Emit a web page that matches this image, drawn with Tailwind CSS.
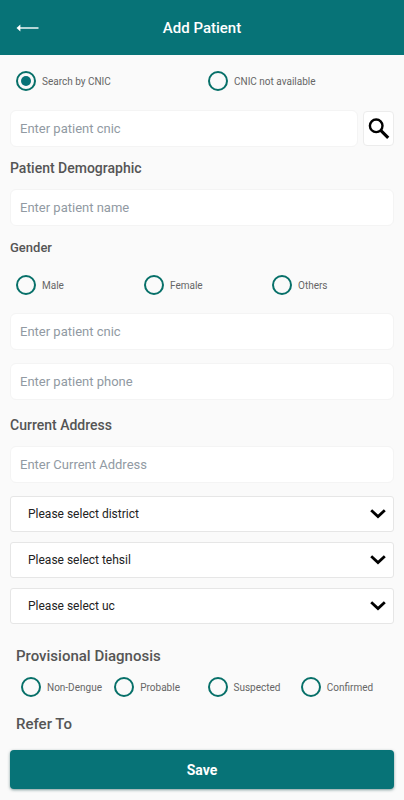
<!DOCTYPE html>
<html lang="en">
<head>
<meta charset="utf-8">
<meta name="viewport" content="width=device-width, initial-scale=1">
<title>Add Patient</title>
<script src="https://cdn.jsdelivr.net/npm/@tailwindcss/browser@4"></script>
</head>
<body class="min-h-screen bg-[#fafafa] font-[Roboto,sans-serif] text-[#555555]">
<header class="grid h-[55px] grid-cols-[1fr_auto_1fr] items-center bg-[#077377] px-4 text-white">
  <button type="button" aria-label="Back" class="justify-self-start">
    <svg class="block h-3 w-6" viewBox="0 0 24 12" fill="none" stroke="currentColor"><path d="M3 6H22.5" stroke-width="1.4"/><path d="M.5 6L4.4 2.6V9.4Z" fill="currentColor" stroke="none"/></svg>
  </button>
  <h1 class="text-[15px] leading-5 font-medium">Add Patient</h1>
</header>
<main>
<form class="px-[10px] pb-[11px]">
  <div role="radiogroup" aria-label="Search mode" class="-mr-[6px] grid h-[52px] grid-cols-2 items-center pl-[6px] text-[10px] text-[#666666]">
    <label class="flex items-center gap-[6px]"><input type="radio" name="mode" checked class="size-5 appearance-none rounded-full border-2 border-[#077069] checked:bg-[#077377] checked:bg-clip-content checked:p-[3px]">Search by CNIC</label>
    <label class="flex items-center gap-[6px]"><input type="radio" name="mode" class="size-5 appearance-none rounded-full border-2 border-[#077069] checked:bg-[#077377] checked:bg-clip-content checked:p-[3px]">CNIC not available</label>
  </div>
  <div class="mt-[3px] flex items-center gap-[5px]">
    <input type="text" aria-label="Search patient cnic" placeholder="Enter patient cnic" class="h-[37px] min-w-0 flex-1 rounded-md border border-[#f4f4f4] bg-white px-[9px] text-[13px] placeholder:text-[#919aa3]">
    <button type="button" aria-label="Search" class="flex h-[35px] w-[31px] items-center justify-center rounded-sm border border-[#ececec] bg-white text-black">
      <svg class="size-6 shrink-0" viewBox="0 0 24 24" fill="none" stroke="currentColor"><circle cx="9.2" cy="8.8" r="6.3" stroke-width="2.4"/><path d="M13.7 13.3L21.2 20.8" stroke-width="3.1"/></svg>
    </button>
  </div>
  <h2 class="flex h-[42px] items-center text-sm font-medium">Patient Demographic</h2>
  <input type="text" aria-label="Patient name" placeholder="Enter patient name" class="block h-[37px] w-full rounded-md border border-[#f4f4f4] bg-white px-[9px] text-[13px] placeholder:text-[#919aa3]">
  <h3 id="gender" class="flex h-11 items-center text-[13px] font-medium">Gender</h3>
  <div role="radiogroup" aria-labelledby="gender" class="-mr-[6px] grid h-[30px] grid-cols-3 items-center pl-[6px] text-[10px] text-[#666666]">
    <label class="flex items-center gap-[6px]"><input type="radio" name="gender" class="size-5 appearance-none rounded-full border-2 border-[#077069] checked:bg-[#077377] checked:bg-clip-content checked:p-[3px]">Male</label>
    <label class="flex items-center gap-[6px]"><input type="radio" name="gender" class="size-5 appearance-none rounded-full border-2 border-[#077069] checked:bg-[#077377] checked:bg-clip-content checked:p-[3px]">Female</label>
    <label class="flex items-center gap-[6px]"><input type="radio" name="gender" class="size-5 appearance-none rounded-full border-2 border-[#077069] checked:bg-[#077377] checked:bg-clip-content checked:p-[3px]">Others</label>
  </div>
  <div class="mt-[13px] flex flex-col gap-[13px]">
    <input type="text" aria-label="Patient cnic" placeholder="Enter patient cnic" class="h-[37px] w-full rounded-md border border-[#f4f4f4] bg-white px-[9px] text-[13px] placeholder:text-[#919aa3]">
    <input type="tel" aria-label="Patient phone" placeholder="Enter patient phone" class="h-[37px] w-full rounded-md border border-[#f4f4f4] bg-white px-[9px] text-[13px] placeholder:text-[#919aa3]">
  </div>
  <h2 class="flex h-[46px] items-center pt-[3px] text-sm font-medium">Current Address</h2>
  <input type="text" aria-label="Current address" placeholder="Enter Current Address" class="block h-[37px] w-full rounded-md border border-[#f4f4f4] bg-white px-[9px] text-[13px] placeholder:text-[#919aa3]">
  <div class="mt-[13px] flex flex-col gap-[10px] text-[12px] text-[#222222]">
    <div class="grid items-center">
      <select aria-label="District" class="col-start-1 row-start-1 h-9 w-full appearance-none rounded-[3px] border border-[#e6e6e6] bg-white pr-8 pl-[17px]"><option>Please select district</option></select>
      <svg class="pointer-events-none col-start-1 row-start-1 mr-[8px] h-[10px] w-4 justify-self-end" viewBox="0 0 16 10" fill="none" stroke="#000" stroke-width="2.8"><path d="M1.2 1.2L8 7.6L14.8 1.2"/></svg>
    </div>
    <div class="grid items-center">
      <select aria-label="Tehsil" class="col-start-1 row-start-1 h-9 w-full appearance-none rounded-[3px] border border-[#e6e6e6] bg-white pr-8 pl-[17px]"><option>Please select tehsil</option></select>
      <svg class="pointer-events-none col-start-1 row-start-1 mr-[8px] h-[10px] w-4 justify-self-end" viewBox="0 0 16 10" fill="none" stroke="#000" stroke-width="2.8"><path d="M1.2 1.2L8 7.6L14.8 1.2"/></svg>
    </div>
    <div class="grid items-center">
      <select aria-label="Union council" class="col-start-1 row-start-1 h-9 w-full appearance-none rounded-[3px] border border-[#e6e6e6] bg-white pr-8 pl-[17px]"><option>Please select uc</option></select>
      <svg class="pointer-events-none col-start-1 row-start-1 mr-[8px] h-[10px] w-4 justify-self-end" viewBox="0 0 16 10" fill="none" stroke="#000" stroke-width="2.8"><path d="M1.2 1.2L8 7.6L14.8 1.2"/></svg>
    </div>
  </div>
  <h2 id="diagnosis" class="mt-5 pl-[6px] text-[15px] leading-6 font-medium">Provisional Diagnosis</h2>
  <div role="radiogroup" aria-labelledby="diagnosis" class="mt-1 grid h-[30px] grid-cols-4 items-center pl-[11px] text-[10px] text-[#666666]">
    <label class="flex items-center gap-[6px]"><input type="radio" name="diagnosis" class="size-5 appearance-none rounded-full border-2 border-[#077069] checked:bg-[#077377] checked:bg-clip-content checked:p-[3px]">Non-Dengue</label>
    <label class="flex items-center gap-[6px]"><input type="radio" name="diagnosis" class="size-5 appearance-none rounded-full border-2 border-[#077069] checked:bg-[#077377] checked:bg-clip-content checked:p-[3px]">Probable</label>
    <label class="flex items-center gap-[6px]"><input type="radio" name="diagnosis" class="size-5 appearance-none rounded-full border-2 border-[#077069] checked:bg-[#077377] checked:bg-clip-content checked:p-[3px]">Suspected</label>
    <label class="flex items-center gap-[6px]"><input type="radio" name="diagnosis" class="size-5 appearance-none rounded-full border-2 border-[#077069] checked:bg-[#077377] checked:bg-clip-content checked:p-[3px]">Confirmed</label>
  </div>
  <h2 class="mt-[10px] pl-[6px] text-[15px] leading-6 font-medium">Refer To</h2>
  <button type="submit" class="mt-[14px] block h-[39px] w-full rounded bg-[#077377] text-sm font-bold text-white shadow-[0_1px_3px_rgba(0,60,60,0.5)]">Save</button>
</form>
</main>
</body>
</html>
